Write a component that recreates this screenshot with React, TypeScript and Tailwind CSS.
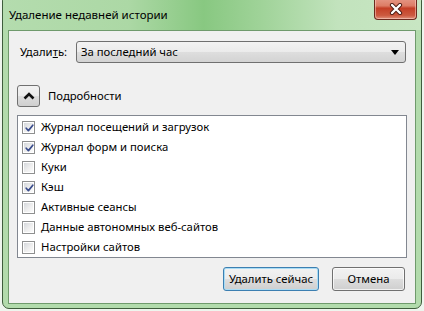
import React from "react";

const ITEMS = [
  { label: "Журнал посещений и загрузок", checked: true },
  { label: "Журнал форм и поиска", checked: true },
  { label: "Куки", checked: false },
  { label: "Кэш", checked: true },
  { label: "Активные сеансы", checked: false },
  { label: "Данные автономных веб-сайтов", checked: false },
  { label: "Настройки сайтов", checked: false },
];

const btnClass =
  "flex items-center justify-center h-[24px] rounded-[3px] border text-[11.3px] text-black bg-[linear-gradient(to_bottom,#f2f2f2_0%,#ebebeb_50%,#dddddd_51%,#cfcfcf_100%)]";

function Checkbox({ checked }: { checked: boolean }) {
  return (
    <span className="flex w-[13px] h-[13px] shrink-0 border border-[#8e8f8f] bg-white p-px">
      <span className="relative flex w-full h-full bg-[linear-gradient(135deg,#d5d8dc_0%,#eeeeee_55%,#fbfbfb_100%)]">
        {checked && (
          <svg width="11" height="11" viewBox="0 0 11 11" className="absolute inset-0">
            <path d="M2.2 5.2 L4.4 7.6 L8.8 2.2" fill="none" stroke="#3a4d8c" strokeWidth="1.7" strokeLinecap="round" strokeLinejoin="round" />
          </svg>
        )}
      </span>
    </span>
  );
}

export default function App() {
  return (
    <div className="w-[424px] h-[311px] overflow-hidden bg-[#eef5ee] font-['Noto_Sans','Open_Sans',sans-serif] text-[11.3px] text-black">
      <div className="-mt-[6px] ml-[2px] w-[420px] h-[315px] flex flex-col rounded-[7px] border border-[#3e5d3c] bg-[#b2dbac]">
        {/* title bar */}
        <div className="flex justify-between h-[35px] shrink-0 rounded-t-[6px] bg-[linear-gradient(90deg,#b4dcae_0%,#acd8a5_30%,#88c881_48%,#a0d399_62%,#c2e3bd_80%,#c8e6c3_100%)]">
          <div className="pl-[6px] pt-[12px] leading-[16px] text-[11.5px] text-black">
            Удаление недавней истории
          </div>
          <div className="mr-[4px] w-[43px] h-[25px] flex items-end justify-center pb-[4px] rounded-b-[4px] border border-t-0 border-[#6b2a1e] bg-[linear-gradient(to_bottom,#e9a595_0%,#dd7d66_45%,#c43f26_55%,#cc5a40_85%,#e0917c_100%)] shadow-[inset_0_0_0_1px_rgba(255,220,210,0.5)]">
            <svg width="14" height="12" viewBox="0 0 14 12">
              <path d="M3 2 L11 10 M11 2 L3 10" stroke="#4a1a12" strokeWidth="4.2" strokeLinecap="round" />
              <path d="M3 2 L11 10 M11 2 L3 10" stroke="#ffffff" strokeWidth="2.4" strokeLinecap="round" />
            </svg>
          </div>
        </div>

        {/* client area */}
        <div className="px-[5px]">
          <div className="h-[274px] flex flex-col border border-[#6f9a6c] bg-[#f0f0f0] pt-[10px]">
            {/* range */}
            <div className="flex items-center h-[22px]">
              <span className="ml-[11px] w-[56px]">
                Удали<span className="underline">т</span>ь:
              </span>
              <div className="flex-1 mr-[9px] h-[22px] flex items-center justify-between rounded-[3px] border border-[#707070] bg-[linear-gradient(to_bottom,#f3f3f3_0%,#ebebeb_50%,#dedede_51%,#d3d3d3_100%)] pl-[4px] pr-[6px]">
                <span>За последний час</span>
                <svg width="8" height="5" viewBox="0 0 8 5">
                  <path d="M0 0 H8 L4 5 Z" fill="#000" />
                </svg>
              </div>
            </div>

            {/* details toggle */}
            <div className="flex items-center h-[22px] mt-[22px]">
              <div className="ml-[8px] w-[23px] h-[22px] flex items-center justify-center rounded-[3px] border border-[#707070] bg-[linear-gradient(to_bottom,#f2f2f2_0%,#ebebeb_50%,#dddddd_51%,#cfcfcf_100%)]">
                <svg width="12" height="8" viewBox="0 0 12 8">
                  <path d="M1.5 6.5 L6 2 L10.5 6.5" fill="none" stroke="#111" strokeWidth="2.6" />
                </svg>
              </div>
              <span className="ml-[8px]">Подробности</span>
            </div>

            {/* items */}
            <div className="mt-[8px] mx-[8px] h-[143px] border border-[#828790] bg-white pt-px">
              {ITEMS.map((item) => (
                <div key={item.label} className="flex items-center h-[20px] pl-[4px]">
                  <Checkbox checked={item.checked} />
                  <span className="ml-[6px] leading-[16px]">{item.label}</span>
                </div>
              ))}
            </div>

            {/* actions */}
            <div className="flex justify-end gap-[13px] mt-[9px] pr-[10px]">
              <button className={`${btnClass} w-[96px] border-[#3c7fb1] shadow-[inset_0_0_0_1px_#a8dcf5]`}>
                Удалить сейчас
              </button>
              <button className={`${btnClass} w-[73px] border-[#707070] shadow-[inset_0_0_0_1px_rgba(255,255,255,0.7)]`}>
                Отмена
              </button>
            </div>
          </div>
        </div>
      </div>
    </div>
  );
}
